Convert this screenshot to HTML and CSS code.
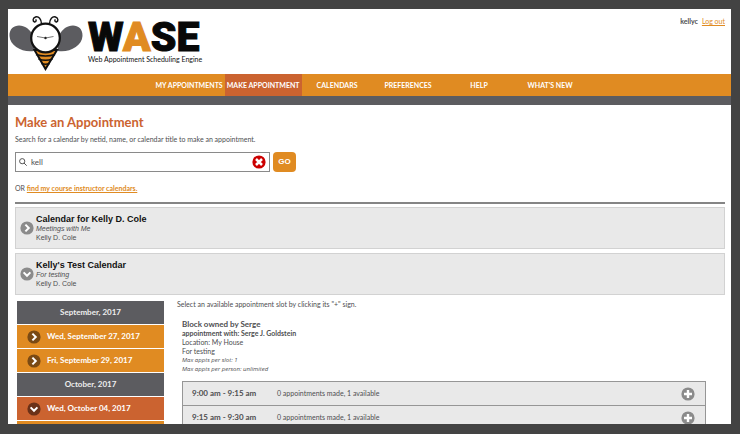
FILE: index.html
```html
<!DOCTYPE html>
<html lang="en">
<head>
<meta charset="utf-8">
<title>WASE - Make an Appointment</title>
<link rel="stylesheet" href="styles.css">
</head>
<body>
<svg class="symbols" aria-hidden="true">
  <symbol id="chevron-right" viewBox="0 0 14 14"><circle cx="7" cy="7" r="6.6" fill="var(--disc)"/><path d="M5.4 3.6 8.8 7l-3.4 3.4" fill="none" stroke="#fff" stroke-width="2"/></symbol>
  <symbol id="chevron-down" viewBox="0 0 14 14"><circle cx="7" cy="7" r="6.6" fill="var(--disc)"/><path d="M3.6 5.4 7 8.8l3.4-3.4" fill="none" stroke="#fff" stroke-width="2"/></symbol>
  <symbol id="plus" viewBox="0 0 14 14"><circle cx="7" cy="7" r="6.6" fill="var(--disc)"/><path d="M7 3v8M3 7h8" stroke="#fff" stroke-width="2.4"/></symbol>
</svg>
<div class="page">
  <header class="header">
    <div class="brand">
      <svg class="bee" viewBox="0 0 74 58" aria-hidden="true">
        <path d="M25 38C14 40 1 33 .5 23 0 12 11 10 18 15c4 3 6 7 8 9ZM49 38c11 2 24-5 24.500-15C74 12 63 10 56 15c-4 3-6 7-8 9Z" fill="#5c5c60"/>
        <path d="m25.500 37 11 19L48 37Z" fill="#e08b22" stroke="#111" stroke-width="2"/>
        <path d="M27 41.500q9.500 3 19 0M29.500 46q7 2.500 14 0M32.500 50.500q4 1.500 8 0" fill="none" stroke="#111" stroke-width="1.500"/>
        <circle cx="36.500" cy="25" r="14.300" fill="#fff" stroke="#111" stroke-width="2.200"/>
        <path d="M32.500 11c0-5-3-8-6-7-3 1-3 4-1 5 2 0 2-2 1-2.500M40.500 11c0-5 3-8 6-7 3 1 3 4 1 5-2 0-2-2-1-2.500" fill="none" stroke="#111" stroke-width="1.400"/>
        <path d="m28 23.500 8.500 1.500 8-1.500" fill="none" stroke="#555" stroke-width=".8"/>
        <circle cx="36.500" cy="25" r="1.200" fill="#222"/>
      </svg>
      <div class="wordmark">
        <div class="name">W<span class="accent">A</span>SE</div>
        <div class="tagline">Web Appointment Scheduling Engine</div>
      </div>
    </div>
    <div class="account"><strong>kellyc</strong><a href="#">Log out</a></div>
  </header>
  <nav class="nav">
    <a href="#">MY APPOINTMENTS</a>
    <a href="#" class="active" aria-current="page">MAKE APPOINTMENT</a>
    <a href="#">CALENDARS</a>
    <a href="#">PREFERENCES</a>
    <a href="#">HELP</a>
    <a href="#">WHAT'S NEW</a>
  </nav>
  <main class="main">
    <h1>Make an Appointment</h1>
    <p class="intro"><label for="q">Search for a calendar by netid, name, or calendar title to make an appointment.</label></p>
    <form class="search">
      <div class="field">
        <svg class="lens" viewBox="0 0 8 8" aria-hidden="true"><circle cx="3.200" cy="3.200" r="2.600"/><path d="m5 5 2.700 2.700"/></svg>
        <input id="q" type="text" value="kell">
        <button type="button" class="clear" aria-label="Clear"><svg viewBox="0 0 14 14"><circle cx="7" cy="7" r="6.600" fill="#c00"/><path d="m4 4 6 6M10 4l-6 6" stroke="#fff" stroke-width="2.500"/></svg></button>
      </div>
      <button type="button" class="go">GO</button>
    </form>
    <p class="alternative">OR <a href="#">find my course instructor calendars.</a></p>
    <section class="calendar">
      <svg class="icon"><use href="#chevron-right"/></svg>
      <div><h2>Calendar for Kelly D. Cole</h2><p><em>Meetings with Me</em></p><p>Kelly D. Cole</p></div>
    </section>
    <section class="calendar">
      <svg class="icon"><use href="#chevron-down"/></svg>
      <div><h2>Kelly's Test Calendar</h2><p><em>For testing</em></p><p>Kelly D. Cole</p></div>
    </section>
    <div class="columns">
      <div class="dates">
        <div class="month">September, 2017</div>
        <button type="button" class="day"><svg class="icon"><use href="#chevron-right"/></svg>Wed, September 27, 2017</button>
        <button type="button" class="day"><svg class="icon"><use href="#chevron-right"/></svg>Fri, September 29, 2017</button>
        <div class="month">October, 2017</div>
        <button type="button" class="day open"><svg class="icon"><use href="#chevron-down"/></svg>Wed, October 04, 2017</button>
        <div class="day"></div>
      </div>
      <div class="detail">
        <p class="hint">Select an available appointment slot by clicking its "+" sign.</p>
        <div class="block">
          <h3>Block owned by Serge</h3>
          <p><strong>appointment with: Serge J. Goldstein</strong></p>
          <p>Location: My House</p>
          <p>For testing</p>
          <p class="limit">Max appts per slot: 1</p>
          <p class="limit">Max appts per person: unlimited</p>
          <ul class="slots">
            <li><span class="time">9:00 am - 9:15 am</span><span class="count">0 appointments made, 1 available</span><button type="button" aria-label="Add"><svg class="icon"><use href="#plus"/></svg></button></li>
            <li><span class="time">9:15 am - 9:30 am</span><span class="count">0 appointments made, 1 available</span><button type="button" aria-label="Add"><svg class="icon"><use href="#plus"/></svg></button></li>
          </ul>
        </div>
      </div>
    </div>
  </main>
</div>
</body>
</html>
```
FILE: styles.css
```css
* { box-sizing: border-box; margin: 0; padding: 0; }
:root {
  --orange: #e08b22;
  --rust: #cb6330;
  --slate: #5c5c60;
  --disc: #8b8b8b;
}
body {
  height: 100vh;
  padding: 9px 9px 10px 8px;
  background: #434343;
  color: #4e4e50;
  font: 7px/9px Lato, "Noto Sans", sans-serif;
  overflow: hidden;
}
button { border: 0; background: none; font: inherit; color: inherit; }
a { color: var(--orange); }
svg { display: block; }
.symbols { display: none; }
.icon { flex: none; width: 14px; height: 14px; }
.page { height: 100%; background: #fff; overflow: hidden; }

.header { display: flex; justify-content: space-between; height: 65px; }
.brand { display: flex; gap: 5px; padding: 4px 0 0 1px; }
.bee { width: 74px; height: 58px; }
.wordmark { padding-top: 7px; }
.name { color: #080808; font: 900 41px/35px Roboto, sans-serif; -webkit-text-stroke: 1px; }
.accent { color: var(--orange); }
.tagline { color: #111; line-height: 9px; }
.account { display: flex; gap: 4px; padding: 8px 6px 0 0; }

.nav {
  display: flex;
  justify-content: center;
  background: var(--orange);
  border-bottom: 9px solid var(--slate);
}
.nav a {
  min-width: 71px;
  padding: 0 2px;
  color: #fff;
  font-weight: 700;
  line-height: 22px;
  text-align: center;
  text-decoration: none;
}
.nav .active { background: var(--rust); }

.main { padding: 9px 6px 0 7px; }
h1 { color: var(--rust); font-size: 13px; line-height: 16px; }
.intro { margin-top: 5px; }
.search { display: flex; gap: 3px; margin-top: 8px; }
.field {
  display: flex;
  align-items: center;
  width: 255px;
  height: 20px;
  padding: 0 3px;
  border: 1px solid #8a8a8a;
}
.lens { width: 8px; height: 8px; fill: none; stroke: #555; }
.field input { flex: 1; min-width: 0; padding-left: 4px; border: 0; outline: 0; color: inherit; font: inherit; font-size: 8px; }
.clear svg { width: 14px; height: 14px; }
.go { width: 23px; border-radius: 4px; background: var(--orange); color: #fff; font: 700 8px/20px "Liberation Sans", sans-serif; }
.alternative { margin-top: 12px; padding-bottom: 9px; margin-bottom: 3px; border-bottom: 2px solid #858585; }
.alternative a { font-weight: 700; }

.calendar {
  display: flex;
  align-items: center;
  gap: 2px;
  height: 42px;
  margin-bottom: 4px;
  padding-left: 4px;
  border: 1px solid #d2d2d2;
  background: #e9e9e9;
  font: 7px/9px "Liberation Sans", sans-serif;
}
h2 { color: #111; font-size: 9px; line-height: 10px; }

.columns { display: flex; gap: 13px; }
.dates { display: flex; flex-direction: column; gap: 1px; width: 147px; margin: 2px 0 0 2px; color: #fff; font-size: 8px; font-weight: 700; }
.month, .day { height: 23px; line-height: 23px; text-align: center; }
.month { background: var(--slate); color: #eee; }
.day { --disc: #7a4a14; display: flex; align-items: center; gap: 6px; padding-left: 10px; background: var(--orange); }
.open { --disc: #6b3118; background: var(--rust); }

.detail { flex: 1; padding-top: 1px; }
.block { padding: 10px 19px 0 5px; }
h3 { font-size: 8px; line-height: 10px; }
.limit { font-family: "Open Sans", sans-serif; font-size: 6px; font-style: italic; }
.slots { margin-top: 7px; list-style: none; border: 1px solid #969696; background: #e9e9e9; }
.slots li { display: flex; align-items: center; height: 24px; padding: 0 10px 0 9px; border-bottom: 1px solid #969696; }
.time { width: 85px; font-size: 8px; font-weight: 700; }
.count { flex: 1; }
```
